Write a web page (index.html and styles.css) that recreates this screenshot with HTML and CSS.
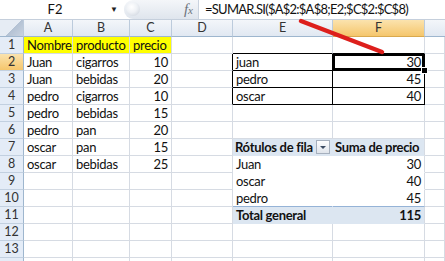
FILE: index.html
```html
<!DOCTYPE html>
<html lang="es">
<head>
    <meta charset="UTF-8">
    <meta name="viewport" content="width=device-width, initial-scale=1.0">
    <title>SUMAR.SI</title>
    <link rel="stylesheet" href="styles.css">
</head>
<body>
    <div class="sheet">
        <div class="fbar">
            <div class="namebox">F2</div>
            <div class="drop">&#9660;</div>
            <div class="fxzone">
                <span class="knob"></span>
                <span class="fx">f<i>x</i></span>
            </div>
            <div class="formula">=SUMAR.SI($A$2:$A$8;E2;$C$2:$C$8)</div>
        </div>

        <div class="grid">
            <div class="row head">
                <div class="corner"></div>
                <div class="ch">A</div>
                <div class="ch">B</div>
                <div class="ch">C</div>
                <div class="ch">D</div>
                <div class="ch">E</div>
                <div class="ch on">F</div>
                <div class="ch last"></div>
            </div>
            <div class="row">
                <div class="rh">1</div>
                <div class="c yel">Nombre</div>
                <div class="c yel">producto</div>
                <div class="c yel">precio</div>
                <div class="c"></div>
                <div class="c bb"></div>
                <div class="c bb"></div>
                <div class="c"></div>
            </div>
            <div class="row">
                <div class="rh on">2</div>
                <div class="c">Juan</div>
                <div class="c">cigarros</div>
                <div class="c n">10</div>
                <div class="c br"></div>
                <div class="c box">juan</div>
                <div class="c box n sel">30<span class="handle"></span></div>
                <div class="c"></div>
            </div>
            <div class="row">
                <div class="rh">3</div>
                <div class="c">Juan</div>
                <div class="c">bebidas</div>
                <div class="c n">20</div>
                <div class="c br"></div>
                <div class="c box">pedro</div>
                <div class="c box n">45</div>
                <div class="c"></div>
            </div>
            <div class="row">
                <div class="rh">4</div>
                <div class="c">pedro</div>
                <div class="c">cigarros</div>
                <div class="c n">10</div>
                <div class="c br"></div>
                <div class="c box">oscar</div>
                <div class="c box n">40</div>
                <div class="c"></div>
            </div>
            <div class="row">
                <div class="rh">5</div>
                <div class="c">pedro</div>
                <div class="c">bebidas</div>
                <div class="c n">15</div>
                <div class="c"></div>
                <div class="c"></div>
                <div class="c"></div>
                <div class="c"></div>
            </div>
            <div class="row">
                <div class="rh">6</div>
                <div class="c">pedro</div>
                <div class="c">pan</div>
                <div class="c n">20</div>
                <div class="c"></div>
                <div class="c"></div>
                <div class="c"></div>
                <div class="c"></div>
            </div>
            <div class="row">
                <div class="rh">7</div>
                <div class="c">oscar</div>
                <div class="c">pan</div>
                <div class="c n">15</div>
                <div class="c"></div>
                <div class="c pv-head pv-l">Rótulos de fila <span class="pv-btn"></span></div>
                <div class="c pv-head">Suma de precio</div>
                <div class="c"></div>
            </div>
            <div class="row">
                <div class="rh">8</div>
                <div class="c">oscar</div>
                <div class="c">bebidas</div>
                <div class="c n">25</div>
                <div class="c"></div>
                <div class="c pv pv-l">Juan</div>
                <div class="c pv n">30</div>
                <div class="c"></div>
            </div>
            <div class="row">
                <div class="rh">9</div>
                <div class="c"></div>
                <div class="c"></div>
                <div class="c"></div>
                <div class="c"></div>
                <div class="c pv pv-l">oscar</div>
                <div class="c pv n">40</div>
                <div class="c"></div>
            </div>
            <div class="row">
                <div class="rh">10</div>
                <div class="c"></div>
                <div class="c"></div>
                <div class="c"></div>
                <div class="c"></div>
                <div class="c pv pv-l pv-end">pedro</div>
                <div class="c pv n pv-end">45</div>
                <div class="c"></div>
            </div>
            <div class="row">
                <div class="rh">11</div>
                <div class="c"></div>
                <div class="c"></div>
                <div class="c"></div>
                <div class="c"></div>
                <div class="c pv-total pv-l">Total general</div>
                <div class="c pv-total n">115</div>
                <div class="c"></div>
            </div>
            <div class="row">
                <div class="rh">12</div>
                <div class="c"></div>
                <div class="c"></div>
                <div class="c"></div>
                <div class="c"></div>
                <div class="c"></div>
                <div class="c"></div>
                <div class="c"></div>
            </div>
            <div class="row">
                <div class="rh">13</div>
                <div class="c"></div>
                <div class="c"></div>
                <div class="c"></div>
                <div class="c"></div>
                <div class="c"></div>
                <div class="c"></div>
                <div class="c"></div>
            </div>
            <div class="row">
                <div class="rh"></div>
                <div class="c"></div>
                <div class="c"></div>
                <div class="c"></div>
                <div class="c"></div>
                <div class="c"></div>
                <div class="c"></div>
                <div class="c"></div>
            </div>
        </div>

        <!-- marca roja dibujada encima de la captura -->
        <svg class="mark" width="445" height="80" viewBox="0 0 445 80">
            <line x1="301" y1="21" x2="382" y2="52" stroke="#dd1f1c" stroke-width="4.5" stroke-linecap="round"/>
        </svg>
    </div>
</body>
</html>
```

FILE: styles.css
```css
body {
    margin: 0;
    padding: 0;
    background-color: #fff;
    font-family: Lato, "Liberation Sans", sans-serif;
    overflow: hidden;
}
.sheet {
    position: relative;
    width: 445px;
    height: 261px;
    overflow: hidden;
}

/* barra de formulas */
.fbar {
    display: flex;
    height: 19px;
    border-bottom: 1px solid #c5cfdc;
    background-color: #fff;
}
.namebox {
    width: 110px;
    text-align: center;
    font-size: 13px;
    line-height: 19px;
    color: #111;
}
.drop {
    width: 14px;
    font-size: 8px;
    line-height: 19px;
    color: #222;
}
.fxzone {
    position: relative;
    width: 74px;
    height: 19px;
    background: linear-gradient(#f4f6f9, #dfe5ed);
    border-radius: 9px 0 0 9px;
    border-right: 1px solid #c9d2de;
}
.knob {
    position: absolute;
    left: 2px;
    top: 2px;
    width: 14px;
    height: 14px;
    border-radius: 50%;
    background: radial-gradient(circle at 40% 35%, #fff 0, #eef1f5 45%, #c7ced8 100%);
}
.fx {
    position: absolute;
    right: 5px;
    top: 0;
    font-family: "Liberation Serif", serif;
    font-style: italic;
    font-size: 15px;
    line-height: 18px;
    color: #6d737b;
}
.fx i {
    font-size: 11px;
}
.formula {
    padding-left: 6px;
    font-size: 13px;
    letter-spacing: -0.75px;
    line-height: 19px;
    color: #111;
    white-space: nowrap;
}

/* cuadricula */
.row {
    display: grid;
    grid-template-columns: 24px 49px 57px 42px 61px 100px 92px 1fr;
    height: 17px;
}
.row > div {
    box-sizing: border-box;
    height: 17px;
    border-right: 1px solid #d6dbe3;
    border-bottom: 1px solid #d6dbe3;
    font-size: 13px;
    letter-spacing: -0.3px;
    line-height: 16px;
    white-space: nowrap;
    overflow: hidden;
    color: #111;
}
.head > div {
    background: linear-gradient(#f3f6fa, #e1e8f2);
    border-right: 1px solid #bccbdc;
    border-bottom: 1px solid #9eb6ce;
    text-align: center;
    font-size: 12.5px;
    letter-spacing: 0;
    color: #333;
}
.head .corner {
    background: linear-gradient(135deg, #e6ecf4 55%, #b4c2d4 56%, #c9d3e0 100%);
}
.head .on {
    background: linear-gradient(#fbe3ae, #f5c66c);
    border-bottom-color: #d9a94e;
}
.head .last {
    border-right: none;
}
.rh {
    background-color: #e4ecf7;
    text-align: center;
    font-size: 12.5px !important;
    letter-spacing: 0 !important;
    color: #333 !important;
    border-right: 1px solid #9eb6ce !important;
    border-bottom: 1px solid #c2d0e0 !important;
}
.rh.on {
    background: linear-gradient(#fbe3ae, #f5c66c);
}
.c {
    padding: 0 3px;
}
.n {
    text-align: right;
}
.yel {
    background-color: #ffff00;
}

/* rango con bordes */
.bb {
    border-bottom: 1px solid #000 !important;
}
.br {
    border-right: 1px solid #000 !important;
}
.box {
    border-right: 1px solid #000 !important;
    border-bottom: 1px solid #000 !important;
}
.sel {
    position: relative;
    overflow: visible !important;
    box-shadow: inset 0 0 0 2px #000;
}
.handle {
    position: absolute;
    right: -4px;
    bottom: -4px;
    width: 5px;
    height: 5px;
    background-color: #000;
    border: 1px solid #fff;
}

/* tabla dinamica */
.pv-head {
    background-color: #dce6f1;
    font-weight: bold;
    border-right-color: #dce6f1 !important;
    border-bottom-color: #dce6f1 !important;
    padding-left: 2px;
}
.pv-head + .pv-head {
    border-right-color: #d6dbe3 !important;
}
.pv-l {
    position: relative;
}
.pv-btn {
    position: absolute;
    right: 2px;
    top: 1px;
    box-sizing: border-box;
    width: 14px;
    height: 14px;
    border: 1px solid #a5afbd;
    background: linear-gradient(#fdfdfe, #dfe4eb);
}
.pv-btn::after {
    content: "";
    position: absolute;
    left: 3px;
    top: 5px;
    border-left: 3px solid transparent;
    border-right: 3px solid transparent;
    border-top: 3px solid #3d4c63;
}
.pv {
    border-bottom-color: #fff !important;
}
.pv.pv-l {
    border-right-color: #fff !important;
}
.pv-end {
    border-bottom: 1px solid #95b3d7 !important;
}
.pv-total {
    background-color: #dce6f1;
    font-weight: bold;
    border-bottom-color: #dce6f1 !important;
}
.pv-total.pv-l {
    border-right-color: #dce6f1 !important;
}

.mark {
    position: absolute;
    left: 0;
    top: 0;
}
```
